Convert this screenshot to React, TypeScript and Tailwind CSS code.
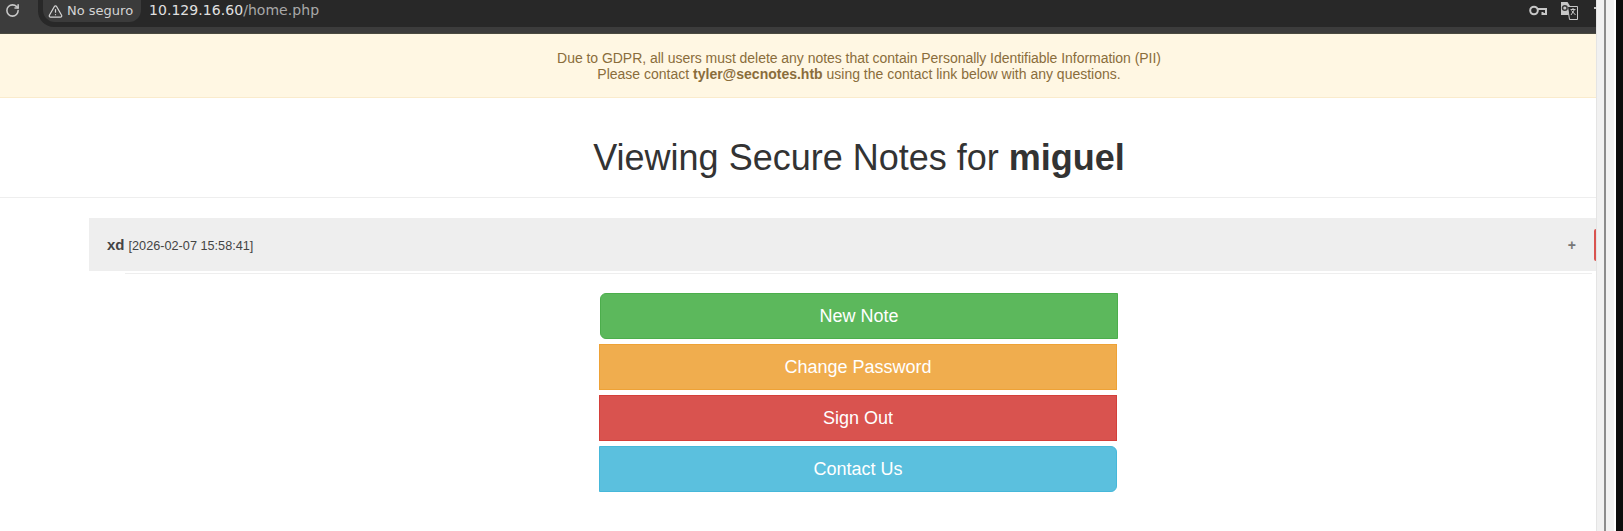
import { RotateCw, TriangleAlert } from "lucide-react";

const buttons = [
  { label: "New Note", cls: "ml-[600px] bg-[#5cb85c] border-[#4cae4c] rounded-l-md" },
  { label: "Change Password", cls: "ml-[599px] bg-[#f0ad4e] border-[#eea236]" },
  { label: "Sign Out", cls: "ml-[599px] bg-[#d9534f] border-[#d43f3a]" },
  { label: "Contact Us", cls: "ml-[599px] bg-[#5bc0de] border-[#46b8da] rounded-r-md" },
];

function BrowserBar() {
  return (
    <div className="flex h-[34px] bg-[#3c3c3c] border-b border-[#4a4a40] font-['DejaVu_Sans',sans-serif]">
      <div className="flex w-[38px] h-[21px] items-center pl-[5px] text-[#c8c8c8]">
        <RotateCw size={15} strokeWidth={2.5} />
      </div>
      <div className="flex flex-1 h-[27px] items-start rounded-bl-2xl bg-[#282828] pl-[5px]">
        <div className="flex h-[22px] w-[98px] items-center gap-[4px] rounded-b-xl bg-[#3b3b3b] pl-[5px] text-[13px] text-[#d4d4d4]">
          <TriangleAlert size={15} strokeWidth={2} />
          <span>No seguro</span>
        </div>
        <div className="ml-[8px] h-[22px] text-[14px] leading-[21px] tracking-[0.05px] text-[#a8a8a8]">
          <span className="text-[#e0e0e0]">10.129.16.60</span>/home.php
        </div>
        <div className="ml-auto flex h-[21px] items-center gap-[14px] text-[#c8c8c8]">
          <svg width="18" height="11" viewBox="0 0 18 11" fill="none" stroke="currentColor" strokeWidth="2">
            <circle cx="5" cy="5.500" r="3.800" />
            <path d="M9 4h8v5h-3.500V7" />
          </svg>
          <svg width="17" height="18" viewBox="0 0 17 18">
            <path d="M0 0h6.500l2.500 4v9H0z" fill="#c8c8c8" />
            <path d="M6.500 4.500h10v13h-8z" fill="#282828" stroke="#c8c8c8" />
            <path d="M9.500 7.500h5M12 6v1.500M10 13l3.500-5.500M10.500 8.500l4 4.500" stroke="#c8c8c8" fill="none" />
            <circle cx="3.800" cy="6" r="2.300" fill="none" stroke="#3a3a3a" strokeWidth="1.500" />
          </svg>
          <span className="ml-[2px] mb-[6px] h-[2px] w-[2px] bg-[#c8c8c8]" />
        </div>
      </div>
    </div>
  );
}

function Scrollbar() {
  return (
    <div className="flex w-[27px] shrink-0">
      <div className="w-[8px] bg-[#f1f1f1] border-l border-[#e4e4e4]" />
      <div className="w-[2px] bg-[#8c8c8c]" />
      <div className="w-[8px] bg-[#f1f1f1]" />
      <div className="w-[2px] bg-white" />
      <div className="w-[7px] bg-[#0c0c0c]" />
    </div>
  );
}

export default function App() {
  return (
    <div className="flex h-[531px] w-[1623px] overflow-hidden bg-white font-['Liberation_Sans',sans-serif]">
      <div className="w-[1596px] shrink-0 overflow-hidden">
        <BrowserBar />
        <div className="w-[1718px]">
          <div className="h-[64px] border-b border-[#faebcc] bg-[#fff7e3] pt-[16px] text-center text-[14px] leading-4 text-[#8a6d3b]">
            <span className="tracking-[-0.04px]">
              Due to GDPR, all users must delete any notes that contain Personally Identifiable Information (PII)
            </span>
            <br />
            Please contact <strong>tyler@secnotes.htb</strong> using the contact link below with any questions.
          </div>
          <h1 className="mt-[40px] h-[60px] border-b border-[#eeeeee] text-center text-[36px] leading-10 text-[#333333]">
            Viewing Secure Notes for <strong>miguel</strong>
          </h1>
          <div className="ml-[89px] mt-[20px] flex h-[53px] w-[1507px] items-center bg-[#eeeeee] pl-[18px] text-[#333333]">
            <span className="mt-[2px] text-[15px] font-bold text-[#444444]">xd</span>
            <span className="ml-[4px] mt-[4px] text-[12.700px] text-[#444444]">[2026-02-07 15:58:41]</span>
            <span className="ml-auto mr-[18px] mt-[2px] text-[14px] font-bold text-[#777777]">+</span>
            <span className="h-[32px] w-[2px] rounded-l-sm bg-[#d9534f]" />
          </div>
          <div className="ml-[125px] mt-[2px] h-px w-[1467px] bg-[#eeeeee]" />
          <div className="mt-[19px] flex flex-col gap-[5px]">
            {buttons.map((b) => (
              <button
                key={b.label}
                className={`h-[46px] w-[518px] border text-[18px] text-white ${b.cls}`}
              >
                {b.label}
              </button>
            ))}
          </div>
        </div>
      </div>
      <Scrollbar />
    </div>
  );
}
